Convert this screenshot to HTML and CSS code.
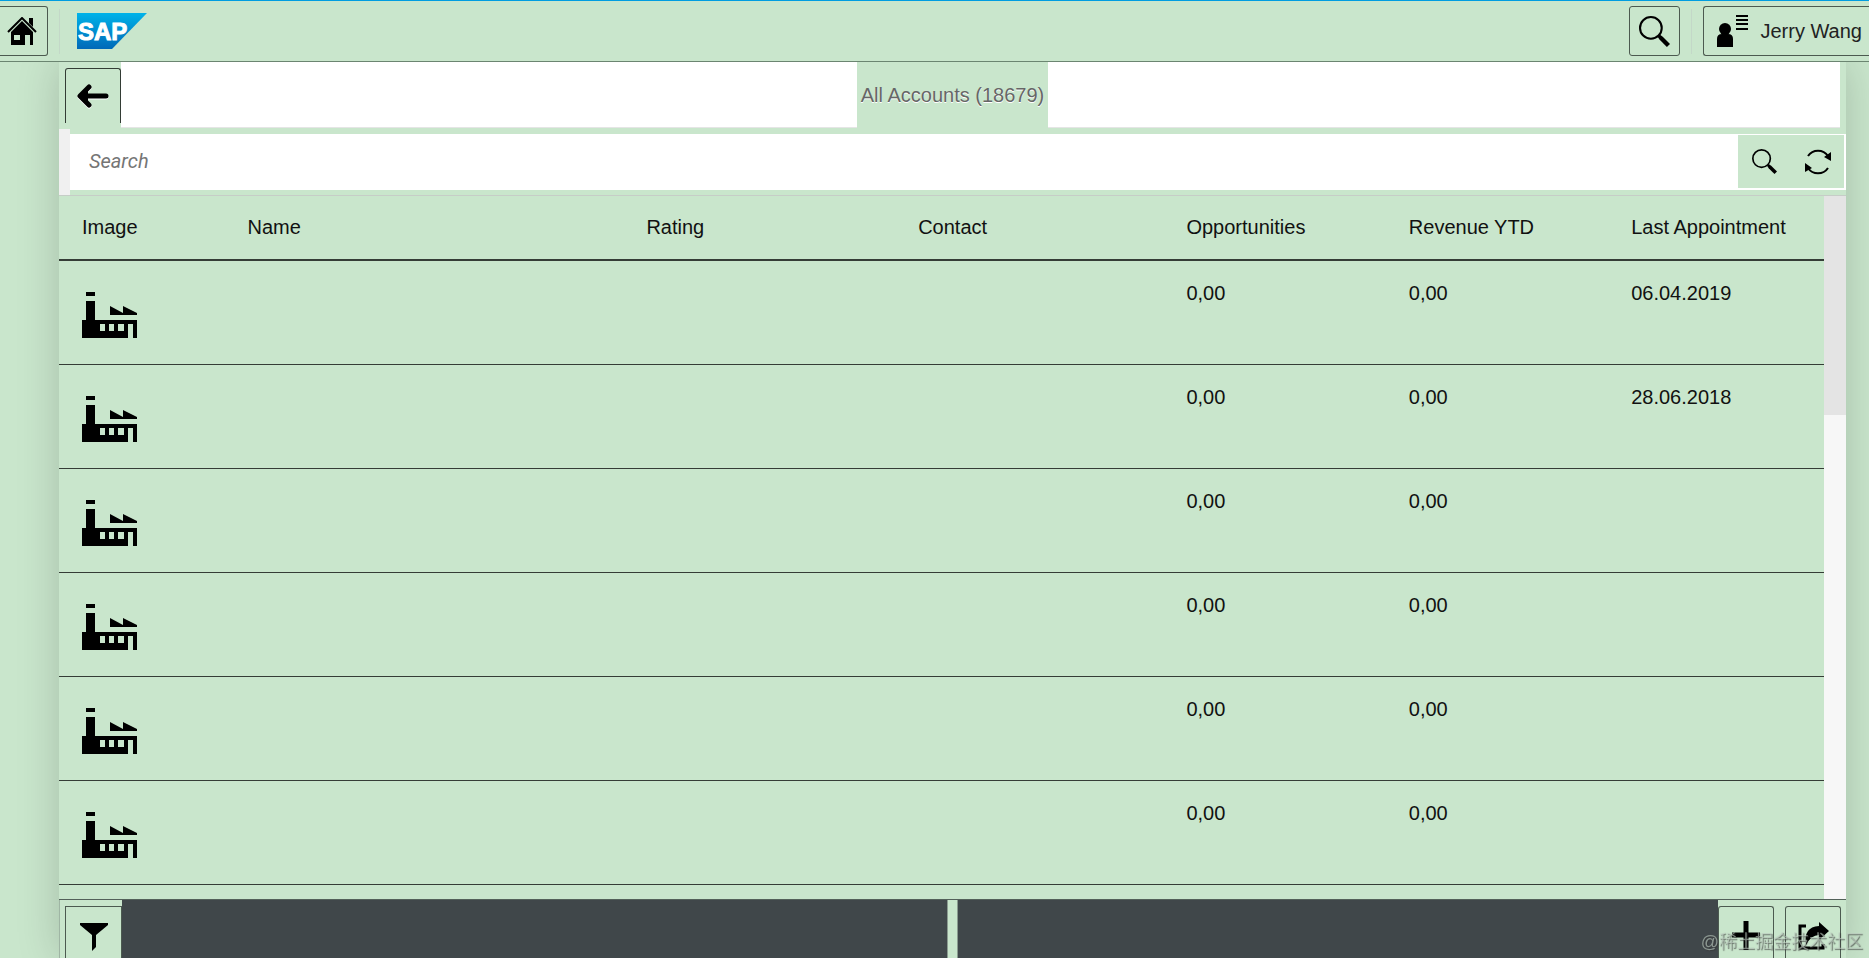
FILE: index.html
```html
<!DOCTYPE html>
<html lang="en">
<head>
<meta charset="utf-8">
<title>All Accounts</title>
<link rel="stylesheet" href="styles.css">
</head>
<body>
<svg class="defs" aria-hidden="true">
  <symbol id="factory" viewBox="0 0 55 46">
    <path d="M4 0h9v4H4zM4 9h9v19h42v18h-4V32h-5v14H0V28h4zM28 14l13 7v-7l14 7v2H28zM18 32v7h5v-7zM27 32v7h5v-7zM36 32v7h6v-7z" fill-rule="evenodd"/>
  </symbol>
  <symbol id="lens" viewBox="0 0 30 30">
    <circle cx="11.500" cy="11.500" r="10.500" fill="none" stroke="#000" stroke-width="2"/>
    <path d="M18 20l2-2 3 2 7 7-3 3-7-7z"/>
  </symbol>
</svg>
<header class="shell">
  <button class="shell-btn home" aria-label="Home">
    <svg width="30" height="28" viewBox="0 0 30 28"><path d="M1 15L15 1l14 14" fill="none" stroke="#000" stroke-width="2"/><path d="M22 1h4v9l-4-4zM15 4l11 11v13h-3V18h-5v10H4V15zM7 18v5h6v-5z" fill-rule="evenodd"/></svg>
  </button>
  <span class="divider"></span>
  <svg class="logo" width="70" height="36" viewBox="0 0 70 36" role="img" aria-label="SAP">
    <defs><linearGradient id="blue" x1="0" y1="0" x2="0" y2="1"><stop offset="0" stop-color="#00b3e9"/><stop offset="1" stop-color="#0069b8"/></linearGradient></defs>
    <path d="M0 0h70L35 36H0z" fill="url(#blue)"/>
    <text class="logo-text" x="1" y="27">SAP</text>
  </svg>
  <span class="spacer"></span>
  <button class="shell-btn find" aria-label="Search"><svg width="31" height="31"><use href="#lens"/></svg></button>
  <span class="divider"></span>
  <button class="shell-btn user">
    <svg width="32" height="32" viewBox="0 0 32 32"><circle cx="9" cy="14" r="6"/><path d="M1 32v-8q0-5 5-5h6q5 0 5 5v8z"/><path d="M20 1h12M20 5h12M20 9h12M20 14h12" stroke="#000" stroke-width="2"/></svg>
    <span>Jerry Wang</span>
  </button>
</header>
<main class="page">
  <div class="title-bar">
    <div class="title-side">
      <button class="back" aria-label="Back"><svg width="32" height="24" viewBox="0 0 32 24"><path d="M4 12h25M12 3L3 12l9 9" fill="none" stroke="#000" stroke-width="5" stroke-linecap="round" stroke-linejoin="round"/><path d="M2 12l9-8v16z"/></svg></button>
      <span class="fill"></span>
    </div>
    <h1 class="title">All Accounts (18679)</h1>
    <div class="title-side end"><span class="fill"></span></div>
  </div>
  <div class="search-bar">
    <span class="gutter"></span>
    <div class="search-field">
      <input class="search-input" type="text" placeholder="Search" aria-label="Search accounts">
      <div class="search-tools">
        <button class="tool" aria-label="Search"><svg width="25" height="25"><use href="#lens"/></svg></button>
        <button class="tool" aria-label="Refresh"><svg width="26" height="26" viewBox="0 0 26 26"><path d="M3 7a12 12 0 0 1 20 0M23 19a12 12 0 0 1-20 0" fill="none" stroke="#000" stroke-width="2"/><path d="M26 3v9l-7-4zM0 14l7 5-7 4z"/></svg></button>
      </div>
    </div>
  </div>
  <div class="content">
    <table class="accounts">
      <colgroup><col class="c-image"><col class="c-name"><col class="c-rating"><col class="c-contact"><col class="c-num"><col class="c-num"><col></colgroup>
      <thead><tr><th>Image</th><th>Name</th><th>Rating</th><th>Contact</th><th>Opportunities</th><th>Revenue YTD</th><th>Last Appointment</th></tr></thead>
      <tbody>
        <tr><td><svg class="pic"><use href="#factory"/></svg></td><td></td><td></td><td></td><td>0,00</td><td>0,00</td><td>06.04.2019</td></tr>
        <tr><td><svg class="pic"><use href="#factory"/></svg></td><td></td><td></td><td></td><td>0,00</td><td>0,00</td><td>28.06.2018</td></tr>
        <tr><td><svg class="pic"><use href="#factory"/></svg></td><td></td><td></td><td></td><td>0,00</td><td>0,00</td><td></td></tr>
        <tr><td><svg class="pic"><use href="#factory"/></svg></td><td></td><td></td><td></td><td>0,00</td><td>0,00</td><td></td></tr>
        <tr><td><svg class="pic"><use href="#factory"/></svg></td><td></td><td></td><td></td><td>0,00</td><td>0,00</td><td></td></tr>
        <tr><td><svg class="pic"><use href="#factory"/></svg></td><td></td><td></td><td></td><td>0,00</td><td>0,00</td><td></td></tr>
      </tbody>
    </table>
    <div class="scroll"><div class="thumb"></div></div>
  </div>
  <footer class="footer">
    <div class="foot-side start">
      <button class="foot-btn filter" aria-label="Filter"><svg width="28" height="28" viewBox="0 0 28 28"><path d="M0 0h28v2L16 12v12l-4 4V12L0 2z"/></svg></button>
      <span class="dark"></span>
    </div>
    <span class="foot-mid"></span>
    <div class="foot-side">
      <span class="dark"></span>
      <button class="foot-btn" aria-label="Add"><svg width="28" height="29" viewBox="0 0 28 29"><path d="M14 0v29M0 14h28" stroke="#000" stroke-width="5"/></svg></button>
      <button class="foot-btn share" aria-label="Share"><svg width="31" height="28" viewBox="0 0 31 28"><path d="M8 4H2v22h23v-4" fill="none" stroke="#000" stroke-width="3"/><path d="M21 0l10 9-10 9v-5Q13 13 8 23 5 5 21 4z"/></svg></button>
    </div>
  </footer>
</main>
<div class="watermark">@稀土掘金技术社区</div>
</body>
</html>
```
FILE: styles.css
```css
* { box-sizing: border-box; }
body {
  margin: 0;
  height: 100vh;
  display: flex;
  flex-direction: column;
  overflow: hidden;
  background: #c9e6cc;
  color: #111;
  font: 20px/24px "Liberation Sans", Arial, sans-serif;
}
button {
  margin: 0;
  padding: 0;
  border: 0;
  background: #c9e6cc;
  color: #222;
  font: inherit;
  display: flex;
  align-items: center;
  justify-content: center;
  flex: none;
}
.defs { position: absolute; width: 0; height: 0; }
.shell {
  position: relative;
  z-index: 1;
  flex: none;
  display: flex;
  align-items: center;
  height: 62px;
  background: #c9e6cc;
  border-top: 1px solid #009de0;
  border-bottom: 1px solid #6b8571;
}
.shell-btn { height: 50px; border: 1px solid #4c5a50; border-radius: 3px; }
.home { width: 48px; border-left: 0; border-radius: 0 3px 3px 0; padding-right: 3px; }
.find { width: 51px; }
.user {
  gap: 12px;
  padding: 0 7px 0 12px;
  border-right: 0;
  border-radius: 3px 0 0 3px;
}
.divider { width: 1px; height: 45px; margin: 0 11px; background: #c3d8c8; }
.logo { margin-left: 6px; }
.logo-text { font: bold 24px "Liberation Sans", Arial, sans-serif; fill: #fff; stroke: #fff; stroke-width: 1px; }
.spacer { flex: 1; }
.page {
  flex: 1;
  min-height: 0;
  display: flex;
  flex-direction: column;
  margin: 0 23px 0 59px;
  background: #c9e6cc;
  box-shadow: 0 0 40px rgba(0, 0, 0, 0.18);
}
.title-bar { flex: none; display: grid; grid-template-columns: 1fr auto 1fr; height: 67px; padding-bottom: 1px; }
.title-side { display: flex; padding-left: 6px; }
.title-side.end { padding: 0 6px 0 0; }
.back {
  width: 56px;
  height: 55px;
  margin-top: 6px;
  border: 1px solid #333c35;
  border-bottom: 0;
  border-radius: 3px 3px 0 0;
}
.back svg { filter: drop-shadow(0 1px 0 #fff); }
.fill { flex: 1; background: #fff; border-bottom: 1px solid #e5e5e5; }
.title { margin: 0; padding: 0 4px; font: 20px/66px "Liberation Sans", Arial, sans-serif; color: #666; text-shadow: 0 1px 0 #fff; }
.search-bar { flex: none; display: flex; align-items: center; height: 67px; border-bottom: 1px solid #c6cdc7; }
.gutter { width: 11px; align-self: stretch; background: #f0f0f0; }
.search-field { flex: 1; display: flex; height: 56px; background: #fff; padding: 1px 2px 2px 0; }
.search-input {
  flex: 1;
  min-width: 0;
  border: 0;
  outline: 0;
  padding: 0 19px 2px;
  background: #fff;
  font: italic 20px/24px Roboto, "Liberation Sans", sans-serif;
}
.search-input::placeholder { color: #757575; }
.search-tools { display: flex; background: #c9e6cc; }
.tool { width: 53px; }
.content { flex: 1; min-height: 0; overflow: hidden; display: flex; }
.accounts { flex: 1; align-self: flex-start; table-layout: fixed; border-collapse: separate; border-spacing: 0; }
.c-image { width: 10%; }
.c-name { width: 22.6%; }
.c-rating { width: 15.4%; }
.c-contact { width: 15.2%; }
.c-num { width: 12.6%; }
th { height: 65px; padding: 0 0 2px 12px; text-align: left; font-weight: normal; white-space: nowrap; border-bottom: 2px solid #343d36; }
td { height: 104px; padding: 20px 0 0 12px; vertical-align: top; border-bottom: 1px solid #343d36; }
th:first-child, td:first-child { padding-left: 23px; }
.pic { display: block; width: 55px; height: 46px; margin-top: 11px; }
.scroll { width: 22px; flex: none; background: #f7f7f7; }
.thumb { height: 31.2%; background: #e4e4e4; }
.footer { flex: none; display: grid; grid-template-columns: 1fr 11px 1fr; height: 59px; border-top: 1px solid #536159; }
.foot-side { display: flex; padding-right: 5px; }
.foot-side.start { padding: 0 0 0 5px; border-left: 1px solid #9fb5a4; }
.dark { flex: 1; background: #40474a; }
.foot-mid { border: solid #8b9c90; border-width: 0 1px; }
.foot-btn { width: 56px; margin-top: 6px; border: 1px solid #4c5a50; border-bottom: 0; border-radius: 3px 3px 0 0; }
.filter { width: 57px; border-radius: 0; padding-top: 8px; }
.share { margin-left: 11px; }
.foot-btn:not(.filter) { padding-top: 6px; }
.watermark {
  position: fixed;
  z-index: 2;
  right: 6px;
  bottom: 4px;
  font: 18px/24px "Liberation Sans", "Noto Sans CJK SC", sans-serif;
  color: rgba(190, 205, 193, 0.6);
  text-shadow: 1px 1px 1px rgba(50, 50, 50, 0.6);
}
```
